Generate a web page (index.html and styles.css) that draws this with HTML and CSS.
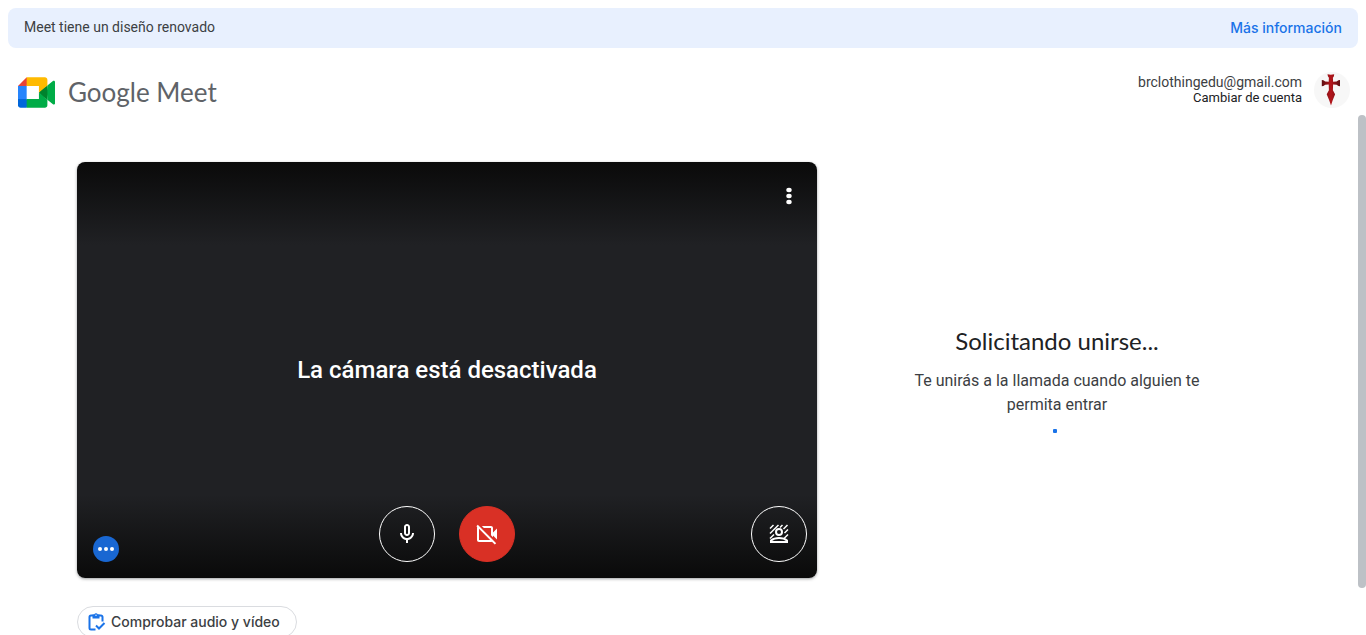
FILE: index.html
```
<!DOCTYPE html>
<html lang="es">
<head>
<meta charset="utf-8">
<meta name="viewport" content="width=device-width, initial-scale=1">
<title>Google Meet</title>
<link rel="stylesheet" href="styles.css">
</head>
<body class="app">
<div class="banner">
  <span>Meet tiene un diseño renovado</span>
  <a class="banner-link" href="#">Más información</a>
</div>
<header class="header">
  <div class="brand">
    <svg class="brand-icon" viewBox="0 0 87.5 72" aria-hidden="true">
      <path fill="#00832d" d="M49.5 36l8.53 9.75 11.47 7.33 2-17.02-2-16.64-11.69 6.44z"/>
      <path fill="#0066da" d="M0 51.5V66c0 3.315 2.685 6 6 6h14.5l3-10.96-3-9.54-9.95-3z"/>
      <path fill="#e94235" d="M20.5 0L0 20.5l10.55 3 9.95-3 2.95-9.41z"/>
      <path fill="#2684fc" d="M20.5 20.5H0v31h20.5z"/>
      <path fill="#00ac47" d="M82.6 8.68L69.5 19.42v33.66l13.16 10.79c1.97 1.54 4.85.135 4.85-2.37V11c0-2.535-2.945-3.925-4.91-2.32zM49.5 36v15.5h-29V72h43c3.315 0 6-2.685 6-6V53.08z"/>
      <path fill="#ffba00" d="M63.5 0h-43v20.5h29V36l20-16.57V6c0-3.315-2.685-6-6-6z"/>
    </svg>
    <span class="brand-name">Google Meet</span>
  </div>
  <div class="account">
    <div class="account-text">
      <span class="account-mail">brclothingedu@gmail.com</span>
      <a class="account-switch" href="#">Cambiar de cuenta</a>
    </div>
    <svg class="avatar" viewBox="0 0 36 36" role="img" aria-label="Cuenta">
      <defs>
        <linearGradient id="cross" x1="0" x2="1" y1="0" y2="0">
          <stop offset="0" stop-color="#5c1014"/>
          <stop offset=".5" stop-color="#b5151b"/>
          <stop offset="1" stop-color="#5c1014"/>
        </linearGradient>
      </defs>
      <circle cx="18" cy="18" r="18" fill="#f7f7f7"/>
      <path fill="url(#cross)" d="M13.500 2.200l3.300.6 3.400-.6-.3 2-1 1.600.2 3.900 3.500-.2 1.800-1.300 1.600-.2v6.200l-1.600-.2-1.800-1.300-3.500-.2-.2 5.700 2.200 4-2.500 6.400L17 33.500l-1.700-5L12.700 22.200l2.200-4-.2-5.700-3.500.2-1.800 1.300-1.600.2V8l1.600.2 1.800 1.300 3.500.2.200-3.900-1-1.600z"/>
    </svg>
  </div>
</header>
<main class="main">
  <section class="preview">
    <div class="video">
      <button class="more" aria-label="Más opciones">
        <svg class="icon" viewBox="0 0 24 24"><ellipse cx="12" cy="6" rx="2.700" ry="2.200"/><ellipse cx="12" cy="12" rx="2.700" ry="2.200"/><ellipse cx="12" cy="18" rx="2.700" ry="2.200"/></svg>
      </button>
      <p class="video-message">La cámara está desactivada</p>
      <div class="controls">
        <button class="status" aria-label="Estado del micrófono">
          <svg class="status-icon" viewBox="0 0 26 26"><circle cx="7" cy="13" r="2"/><circle cx="13" cy="13" r="2"/><circle cx="19" cy="13" r="2"/></svg>
        </button>
        <div class="controls-center">
          <button class="round" aria-label="Desactivar micrófono">
            <svg class="icon" viewBox="0 0 24 24"><path d="M12 14c1.660 0 3-1.340 3-3V5c0-1.660-1.340-3-3-3S9 3.340 9 5v6c0 1.660 1.340 3 3 3zm-1-9c0-.55.45-1 1-1s1 .45 1 1v6c0 .55-.45 1-1 1s-1-.45-1-1V5zm6 6c0 2.760-2.240 5-5 5s-5-2.240-5-5H5c0 3.530 2.610 6.430 6 6.920V21h2v-3.080c3.390-.49 6-3.390 6-6.920h-2z"/></svg>
          </button>
          <button class="round round-off" aria-label="Activar cámara">
            <svg class="icon" viewBox="0 0 24 24"><path d="M18 10.480V6c0-1.100-.9-2-2-2H6.830l2 2H16v7.170l2 2v-1.650l4 3.980v-11l-4 3.980zM16 16L6 6 4 4 2.810 2.810 1.390 4.220l.85.85C2.090 5.350 2 5.660 2 6v12c0 1.100.9 2 2 2h12c.34 0 .65-.09.93-.24l2.850 2.850 1.410-1.410L18 18l-2-2zM4 18V6.830L15.170 18H4z"/></svg>
          </button>
        </div>
        <button class="round round-effects" aria-label="Aplicar efectos visuales">
          <svg class="icon" viewBox="0 0 24 24">
            <g fill="none" stroke="#fff">
              <path stroke-width="1.500" d="M3 6.500L6.500 3M3 11.500L11.500 3M3 16.500l4-4M13 5.500L15.500 3M16.500 7L20.500 3M17.500 11l3.500-3.500M17 16.500l4-4"/>
              <circle cx="12" cy="10" r="3" stroke-width="2"/>
              <path stroke-width="2" d="M4 20v-1.500c2-1.700 5-2.500 8-2.500s6 .8 8 2.500V20z"/>
            </g>
          </svg>
        </button>
      </div>
    </div>
    <button class="check">
      <svg class="check-icon" viewBox="0 0 20 20" fill="none" stroke="#1a73e8" stroke-width="2">
        <path d="M8.500 17.500H4a1.500 1.500 0 0 1-1.500-1.500V5A1.500 1.500 0 0 1 4 3.500h10A1.500 1.500 0 0 1 15.500 5v4.500"/>
        <path fill="#1a73e8" stroke="none" d="M5.500 2.500h1.700a2 2 0 0 1 3.600 0h1.700v4h-7z"/>
        <circle cx="9" cy="3.300" r=".7" fill="#fff" stroke="none"/>
        <path d="M9 13.500l3 3 5.500-5.500"/>
      </svg>
      Comprobar audio y vídeo
    </button>
  </section>
  <section class="join" aria-live="polite">
    <h1 class="join-title">Solicitando unirse...</h1>
    <p class="join-text">Te unirás a la llamada cuando alguien te permita entrar</p>
    <div class="loader"></div>
  </section>
</main>
<div class="scroll-thumb"></div>
</body>
</html>
```
FILE: styles.css
```
* {
  box-sizing: border-box;
}

.app {
  margin: 0;
  height: 100vh;
  display: flex;
  flex-direction: column;
  overflow: hidden;
  background: #fff;
  color: #3c4043;
  font-family: Roboto, sans-serif;
  font-size: 14px;
}

button {
  margin: 0;
  padding: 0;
  border: 0;
  background: none;
  font: inherit;
  cursor: pointer;
}

a {
  text-decoration: none;
}

.banner {
  flex: none;
  display: flex;
  align-items: center;
  justify-content: space-between;
  margin: 8px 8px 0;
  padding: 8px 16px 10px;
  min-height: 40px;
  line-height: 20px;
  border-radius: 8px;
  background: #e8f0fe;
}

.banner-link {
  padding-top: 2px;
  color: #1a73e8;
  font-family: Inter, sans-serif;
  font-weight: 500;
}

.header {
  flex: none;
  display: flex;
  align-items: flex-start;
  justify-content: space-between;
  padding: 24px 16px 7px 18px;
}

.brand {
  display: flex;
  align-items: center;
  gap: 13px;
  padding-top: 4px;
}

.brand-icon {
  width: 37px;
  height: 31px;
}

.brand-name {
  color: #5f6368;
  font-family: Lato, sans-serif;
  font-size: 26px;
  line-height: 32px;
}

.account {
  display: flex;
  align-items: center;
  gap: 12px;
}

.account-text {
  display: flex;
  flex-direction: column;
  align-items: flex-end;
  line-height: 16px;
}

.account-switch {
  color: #202124;
  font-size: 13px;
}

.avatar {
  width: 36px;
  height: 36px;
}

.main {
  flex: 1;
  min-height: 0;
  display: grid;
  grid-template-columns: minmax(0, 1fr) 448px;
  align-items: start;
  column-gap: 16px;
  padding: 47px 85px 0 77px;
}

.preview {
  display: flex;
  flex-direction: column;
  align-items: flex-start;
  gap: 28px;
}

.video {
  width: 100%;
  aspect-ratio: 16 / 9;
  display: flex;
  flex-direction: column;
  justify-content: space-between;
  padding: 22px 10px 16px 16px;
  border-radius: 8px;
  background: linear-gradient(#0a0a0a, #202124 20%, #202124 80%, #0a0a0a);
  box-shadow: 0 1px 3px rgba(60, 64, 67, 0.5);
}

.more {
  align-self: flex-end;
  margin-right: 6px;
  height: 24px;
}

.icon {
  display: block;
  width: 24px;
  height: 24px;
  fill: #fff;
}

.video-message {
  margin: 26px 0 0;
  padding-right: 6px;
  color: #fff;
  font-size: 24px;
  font-weight: 500;
  line-height: 32px;
  text-align: center;
}

.controls {
  display: grid;
  grid-template-columns: 1fr auto 1fr;
  align-items: end;
}

.controls-center {
  display: flex;
  gap: 24px;
  margin-right: 6px;
}

.status {
  width: 26px;
  height: 26px;
  border-radius: 50%;
  background: #1967d2;
}

.status-icon {
  display: block;
  fill: #fff;
}

.round {
  display: grid;
  place-items: center;
  width: 56px;
  height: 56px;
  border: 1px solid #fff;
  border-radius: 50%;
}

.round-off {
  border-color: #d93025;
  background: #d93025;
}

.round-effects {
  justify-self: end;
}

.check {
  display: flex;
  align-items: center;
  gap: 4px;
  padding: 0 16px 0 9px;
  height: 32px;
  border: 1px solid #dadce0;
  border-radius: 16px;
  background: #fff;
  color: #3c4043;
  font-family: Inter, sans-serif;
  font-weight: 500;
  line-height: 20px;
}

.check-icon {
  width: 20px;
  height: 20px;
}

.join {
  align-self: start;
  display: flex;
  flex-direction: column;
  align-items: center;
  gap: 12px;
  padding-top: 163px;
  text-align: center;
}

.join-title {
  margin: 0;
  color: #202124;
  font-family: Lato, sans-serif;
  font-size: 24px;
  font-weight: 400;
  line-height: 32px;
}

.join-text {
  margin: 0;
  max-width: 304px;
  font-size: 16px;
  line-height: 24px;
}

.loader {
  width: 4px;
  height: 4px;
  margin-right: 4px;
  border-radius: 1px;
  background: #1a73e8;
}

.scroll-thumb {
  position: fixed;
  top: 115px;
  right: 0;
  width: 8px;
  height: calc((100vh - 115px) * 0.91);
  border-radius: 4px;
  background: #bdc1c6;
}
```
